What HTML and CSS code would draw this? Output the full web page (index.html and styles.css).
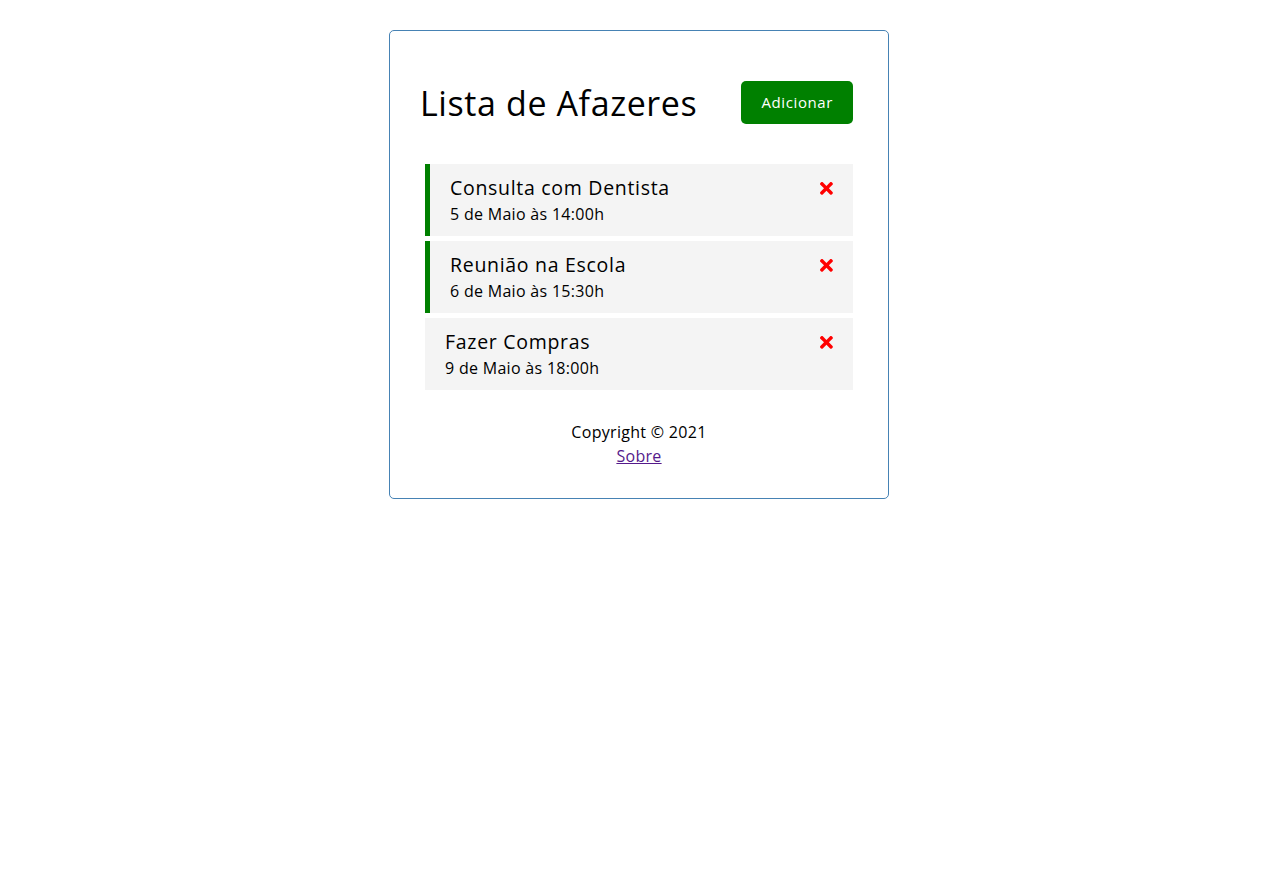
FILE: index.html
```html
<!DOCTYPE html>
<html lang="pt-BR">
<head>
<meta charset="utf-8">
<title>Lista de Afazeres</title>
<link rel="stylesheet" href="styles.css">
</head>
<body>
<div class="container">
  <header class="header">
    <h1>Lista de Afazeres</h1>
    <button class="btn">Adicionar</button>
  </header>
  <div class="tasks">
    <div class="task reminder">
      <h3>Consulta com Dentista <svg class="del" viewBox="0 0 352 512"><path d="M242.72 256l100.07-100.07c12.28-12.28 12.28-32.19 0-44.48l-22.24-22.24c-12.28-12.28-32.19-12.280-44.48 0L176 189.28 75.93 89.21c-12.28-12.28-32.19-12.28-44.48 0L9.21 111.45c-12.28 12.28-12.28 32.19 0 44.48L109.28 256 9.21 356.07c-12.28 12.28-12.28 32.19 0 44.48l22.24 22.24c12.28 12.28 32.2 12.28 44.48 0L176 322.72l100.07 100.07c12.28 12.28 32.2 12.28 44.48 0l22.24-22.24c12.28-12.28 12.28-32.19 0-44.48L242.72 256z"/></svg></h3>
      <p>5 de Maio às 14:00h</p>
    </div>
    <div class="task reminder">
      <h3>Reunião na Escola <svg class="del" viewBox="0 0 352 512"><path d="M242.72 256l100.07-100.07c12.28-12.28 12.28-32.19 0-44.48l-22.24-22.24c-12.28-12.28-32.19-12.280-44.48 0L176 189.28 75.93 89.21c-12.28-12.28-32.19-12.28-44.48 0L9.21 111.45c-12.28 12.28-12.28 32.19 0 44.48L109.28 256 9.21 356.07c-12.28 12.28-12.28 32.19 0 44.48l22.24 22.24c12.28 12.28 32.2 12.28 44.48 0L176 322.72l100.07 100.07c12.28 12.28 32.2 12.28 44.48 0l22.24-22.24c12.28-12.28 12.28-32.19 0-44.48L242.72 256z"/></svg></h3>
      <p>6 de Maio às 15:30h</p>
    </div>
    <div class="task">
      <h3>Fazer Compras <svg class="del" viewBox="0 0 352 512"><path d="M242.72 256l100.07-100.07c12.28-12.28 12.28-32.19 0-44.48l-22.24-22.24c-12.28-12.28-32.19-12.280-44.48 0L176 189.28 75.93 89.21c-12.28-12.28-32.19-12.28-44.48 0L9.21 111.45c-12.28 12.28-12.28 32.19 0 44.48L109.28 256 9.21 356.07c-12.28 12.28-12.28 32.19 0 44.48l22.24 22.24c12.28 12.28 32.2 12.28 44.48 0L176 322.72l100.07 100.07c12.28 12.28 32.2 12.28 44.48 0l22.24-22.24c12.28-12.28 12.28-32.19 0-44.48L242.72 256z"/></svg></h3>
      <p>9 de Maio às 18:00h</p>
    </div>
  </div>
  <footer class="footer">
    <p>Copyright &copy; 2021</p>
    <a class="link" href="#about">Sobre</a>
  </footer>
</div>
</body>
</html>
```
FILE: styles.css
```css
* {
  box-sizing: border-box;
  margin: 0;
  padding: 0;
}

body {
  font-family: "Open Sans", "DejaVu Sans", sans-serif;
  font-size: 16px;
  line-height: 24px;
  letter-spacing: 0.3px;
  color: #000;
  background: #fff;
  padding-right: 1px;
}

.container {
  max-width: 500px;
  margin: 30px auto;
  border: 1px solid steelblue;
  border-radius: 5px;
  padding: 30px;
}

.header {
  display: flex;
  justify-content: space-between;
  align-items: center;
  height: 83px;
  margin-bottom: 20px;
}

.header h1 {
  font-size: 34px;
  line-height: 48px;
  font-weight: 400;
  letter-spacing: 0.6px;
}

.btn {
  background: #008000;
  color: #fff;
  border: none;
  border-radius: 5px;
  padding: 10px 20px;
  margin: 5px;
  font-family: inherit;
  font-size: 15px;
  line-height: 23px;
  letter-spacing: 0.6px;
  cursor: pointer;
}

.task {
  background: #f4f4f4;
  margin: 5px;
  padding: 10px 20px;
  cursor: pointer;
}

.task.reminder {
  border-left: 5px solid green;
}

.task h3 {
  display: flex;
  align-items: center;
  justify-content: space-between;
  font-size: 19.5px;
  line-height: 28px;
  font-weight: 500;
  letter-spacing: 0.7px;
}

.del {
  width: 12.9px;
  height: 18.72px;
  fill: red;
}

.footer {
  margin-top: 30px;
  text-align: center;
}

.link {
  color: #551a8b;
}
```
